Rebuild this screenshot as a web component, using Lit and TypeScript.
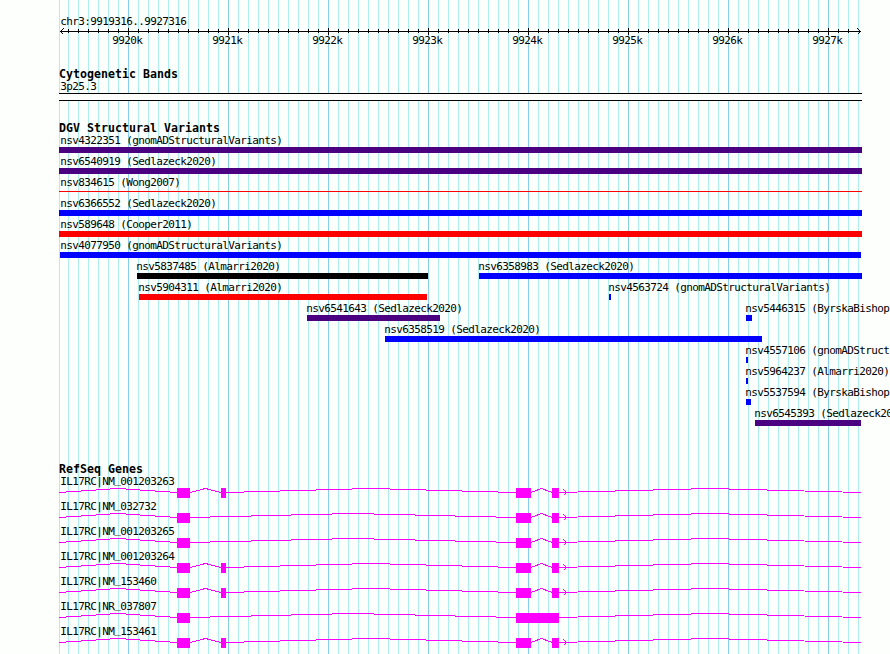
import { LitElement, html, svg, css } from "lit";
import { customElement, property } from "lit/decorators.js";
import { styleMap } from "lit/directives/style-map.js";

// left edge and width of the drawn panel, in pixels
const LEFT = 59;
const WIDTH = 803;

interface Variant {
  label: string;
  start: number;
  end: number;
  color: string;
  thin?: boolean;
}

interface Gene {
  label: string;
  exons: [number, number][];
  arrow: boolean;
}

const GAIN = "#0000ff";
const LOSS = "#ff0000";
const COMPLEX = "#4b0082";

// one inner list per bumped row
const VARIANTS: Variant[][] = [
  [{ label: "nsv4322351 (gnomADStructuralVariants)", start: 59, end: 862, color: COMPLEX }],
  [{ label: "nsv6540919 (Sedlazeck2020)", start: 59, end: 862, color: COMPLEX }],
  [{ label: "nsv834615 (Wong2007)", start: 59, end: 862, color: LOSS, thin: true }],
  [{ label: "nsv6366552 (Sedlazeck2020)", start: 59, end: 862, color: GAIN }],
  [{ label: "nsv589648 (Cooper2011)", start: 59, end: 862, color: LOSS }],
  [{ label: "nsv4077950 (gnomADStructuralVariants)", start: 60, end: 861, color: GAIN }],
  [
    { label: "nsv5837485 (Almarri2020)", start: 137, end: 428, color: "#000000" },
    { label: "nsv6358983 (Sedlazeck2020)", start: 479, end: 862, color: GAIN },
  ],
  [
    { label: "nsv5904311 (Almarri2020)", start: 139, end: 427, color: LOSS },
    { label: "nsv4563724 (gnomADStructuralVariants)", start: 609, end: 611, color: GAIN },
  ],
  [
    { label: "nsv6541643 (Sedlazeck2020)", start: 307, end: 440, color: COMPLEX },
    { label: "nsv5446315 (ByrskaBishop", start: 746, end: 752, color: GAIN },
  ],
  [{ label: "nsv6358519 (Sedlazeck2020)", start: 385, end: 762, color: GAIN }],
  [{ label: "nsv4557106 (gnomADStruct", start: 746, end: 748, color: GAIN }],
  [{ label: "nsv5964237 (Almarri2020)", start: 746, end: 748, color: GAIN }],
  [{ label: "nsv5537594 (ByrskaBishop", start: 746, end: 751, color: GAIN }],
  [{ label: "nsv6545393 (Sedlazeck20", start: 755, end: 861, color: COMPLEX }],
];

const FULL: [number, number][] = [[177, 190], [221, 226], [516, 531], [552, 559]];
const SHORT: [number, number][] = [[177, 190], [516, 531], [552, 559]];

const GENES: Gene[] = [
  { label: "IL17RC|NM_001203263", exons: FULL, arrow: true },
  { label: "IL17RC|NM_032732", exons: SHORT, arrow: true },
  { label: "IL17RC|NM_001203265", exons: SHORT, arrow: true },
  { label: "IL17RC|NM_001203264", exons: FULL, arrow: true },
  { label: "IL17RC|NM_153460", exons: FULL, arrow: true },
  { label: "IL17RC|NR_037807", exons: [[177, 190], [516, 559]], arrow: false },
  { label: "IL17RC|NM_153461", exons: FULL, arrow: true },
];

const shared = css`
  :host {
    display: block;
  }

  svg {
    display: block;
    overflow: visible;
    shape-rendering: crispEdges;
  }

  h2 {
    margin: 0;
    height: 12px;
    font-size: 11.6px;
    line-height: 13px;
    font-weight: bold;
    letter-spacing: 0.017px;
    white-space: nowrap;
  }

  .label {
    height: 13px;
    line-height: 13px;
    letter-spacing: -0.622px;
    text-indent: 0.3px;
    white-space: pre;
  }
`;

@customElement("scale-ruler")
export class ScaleRuler extends LitElement {
  static styles = [
    shared,
    css`
      .region {
        padding-left: 1px;
      }

      svg {
        height: 6px;
      }

      .numbers {
        display: flex;
        padding-left: 53px;
      }

      .numbers .label {
        flex: 0 0 100px;
      }
    `,
  ];

  render() {
    const ticks = [];
    for (let x = 9; x < 799; x += 10) {
      const major = x % 100 === 69;
      ticks.push(svg`<rect x=${x} y=${major ? 0 : 1} width="1" height=${major ? 7 : 4} />`);
    }
    const numbers = [];
    for (let k = 9920; k <= 9927; k++) numbers.push(`${k}k`);

    return html`
      <div class="label region">chr3:9919316..9927316</div>
      <svg width=${WIDTH} height="6">
        <rect x="1" y="3" width="801" height="1" />
        ${ticks}
        <path d="M4.5 0.5 L1.5 3.5 L4.5 6.5 M798.5 0.5 L801.5 3.5 L798.5 6.5" fill="none" stroke="#000" />
      </svg>
      <div class="numbers">
        ${numbers.map((n) => html`<div class="label">${n}</div>`)}
      </div>
    `;
  }
}

@customElement("variant-track")
export class VariantTrack extends LitElement {
  static styles = [
    shared,
    css`
      .row {
        display: grid;
        grid-template-columns: 100%;
        height: 21px;
      }

      .feature {
        grid-area: 1 / 1;
      }

      .feature .label {
        margin-left: -1px;
      }

      .feature.edge .label {
        margin-left: 1px;
      }

      .feature.inset .label {
        margin-left: 0;
      }

      .bar {
        height: 6px;
      }

      .bar.thin {
        height: 1px;
        margin-top: 2px;
      }
    `,
  ];

  private feature(v: Variant) {
    const place = v.start === LEFT ? "edge" : v.start === LEFT + 1 ? "inset" : "";
    return html`
      <div class="feature ${place}" style=${styleMap({ marginLeft: `${v.start - LEFT}px` })}>
        <div class="label">${v.label}</div>
        <div
          class="bar ${v.thin ? "thin" : ""}"
          style=${styleMap({ width: `${v.end - v.start}px`, background: v.color })}
        ></div>
      </div>
    `;
  }

  render() {
    return html`
      <h2>DGV Structural Variants</h2>
      ${VARIANTS.map((row) => html`<div class="row">${row.map((v) => this.feature(v))}</div>`)}
    `;
  }
}

@customElement("gene-model")
export class GeneModel extends LitElement {
  @property({ attribute: false }) gene!: Gene;

  static styles = [
    shared,
    css`
      :host {
        height: 25px;
      }

      .label {
        height: 12px;
        padding-left: 1px;
      }

      /* keeps the underscore clear of the intron line */
      .under {
        line-height: 0;
        vertical-align: 2px;
      }

      svg {
        margin-top: 1px;
        fill: #ff00ff;
      }

      polyline {
        fill: none;
        stroke: #ff00ff;
      }
    `,
  ];

  // hat-shaped intron, 4px high at its middle
  private intron(from: number, to: number) {
    const y = 4.5;
    return svg`<polyline points="${from},${y} ${(from + to) / 2},${y - 4} ${to},${y}" />`;
  }

  render() {
    const [prefix, accession] = this.gene.label.split("_");
    const exons = this.gene.exons.map(([a, b]) => [a - LEFT, b - LEFT]);
    const gaps = [];
    let last = 0;
    for (const [a, b] of exons) {
      gaps.push(this.intron(last, a));
      last = b;
    }
    gaps.push(this.intron(last, 802));

    return html`
      <div class="label">${prefix}<span class="under">_</span>${accession}</div>
      <svg width=${WIDTH} height="10">
        ${gaps}
        ${exons.map(([a, b]) => svg`<rect x=${a} y="0" width=${b - a} height="10" />`)}
        ${this.gene.arrow ? svg`<polyline points="504.5,1.5 507.5,4.5 504.5,7.5" />` : ""}
      </svg>
    `;
  }
}

@customElement("app-root")
export class AppRoot extends LitElement {
  static styles = [
    shared,
    css`
      :host {
        height: 654px;
        overflow: hidden;
        background: #fdfffc;
        color: #000;
        font-family: "DejaVu Sans Mono", monospace;
        font-size: 11px;
      }

      main {
        box-sizing: border-box;
        width: 803px;
        height: 654px;
        margin-left: 59px;
        padding-top: 15px;
        background-image: linear-gradient(90deg, #87ceeb 1px, transparent 1px),
          linear-gradient(90deg, #afeeee 1px, transparent 1px),
          linear-gradient(#afeeee, #afeeee);
        background-size: 100px 100%, 10px 100%, 1px 100%;
        background-position: 69px 0, 9px 0, 0 0;
        background-repeat: repeat-x, repeat-x, no-repeat;
      }

      .cyto {
        margin-top: 21px;
      }

      .cyto .label {
        padding-left: 1px;
      }

      .band {
        box-sizing: border-box;
        height: 8px;
        border: solid #000;
        border-width: 1px 0;
        background: #fdfffc;
      }

      variant-track {
        margin-top: 21px;
      }

      .genes {
        margin-top: 35px;
      }
    `,
  ];

  render() {
    return html`
      <main>
        <scale-ruler></scale-ruler>
        <section class="cyto">
          <h2>Cytogenetic Bands</h2>
          <div class="label">3p25.3</div>
          <div class="band"></div>
        </section>
        <variant-track></variant-track>
        <section class="genes">
          <h2>RefSeq Genes</h2>
          ${GENES.map((g) => html`<gene-model .gene=${g}></gene-model>`)}
        </section>
      </main>
    `;
  }
}

declare global {
  interface HTMLElementTagNameMap {
    "app-root": AppRoot;
    "scale-ruler": ScaleRuler;
    "variant-track": VariantTrack;
    "gene-model": GeneModel;
  }
}
